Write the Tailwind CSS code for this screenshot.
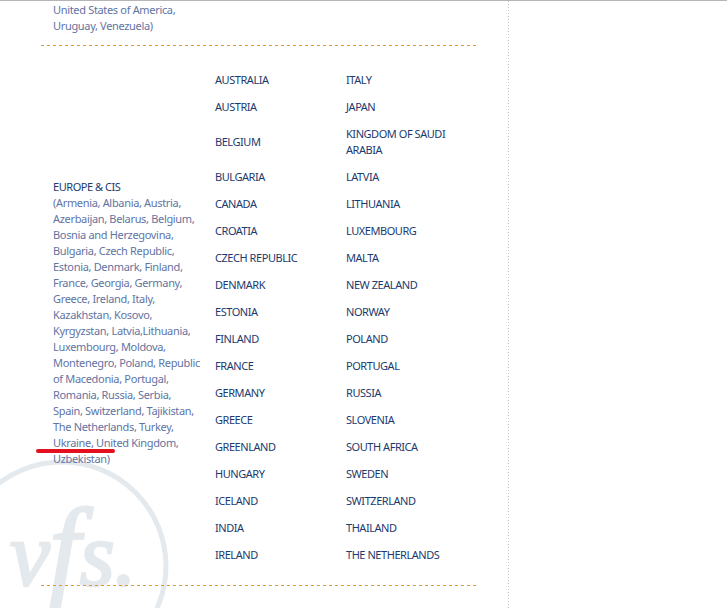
<!DOCTYPE html>
<html lang="en">
<head>
    <meta charset="UTF-8">
    <title>VFS Countries</title>
    <script src="https://cdn.jsdelivr.net/npm/@tailwindcss/browser@4"></script>
</head>
<body class="bg-white">
    <div class="relative w-[727px] h-[608px] overflow-hidden border-t border-[#b5b5b5] font-['Noto_Sans',sans-serif] text-[11px] tracking-[-0.45px] leading-4 text-[#1c3a6e]">
        <!-- watermark -->
        <svg class="absolute left-0 top-[-1px]" width="180" height="608" viewBox="0 0 180 608">
            <circle cx="62" cy="566" r="104" fill="none" stroke="#e4e9ee" stroke-width="5"/>
            <text x="10" y="585" font-family="Liberation Serif" font-style="italic" font-size="90" fill="#e4e9ee" stroke="#e4e9ee" stroke-width="2.5">v<tspan font-size="110">f</tspan>s.</text>
        </svg>

        <div class="relative flex h-full">
            <div class="w-[508px] pl-[41px]">
                <div class="w-[435px]">
                    <div class="h-[44px] pl-3 pt-[1px] text-[#5f74a3] tracking-[-0.33px]">United States of America,<br>Uruguay, Venezuela)</div>
                    <div class="h-px bg-[repeating-linear-gradient(to_right,#e0982f_0,#e0982f_3px,transparent_3px,transparent_6px)]"></div>
                    <div class="h-[539px] flex pt-[20px]">
                        <div class="w-[174px] shrink-0 pl-3 flex items-center pb-[6px]">
                            <p>EUROPE &amp; CIS<br>
                            <span class="text-[#5f74a3] tracking-[-0.33px]">(Armenia, Albania, Austria,<br>
                            Azerbaijan, Belarus, Belgium,<br>
                            Bosnia and Herzegovina,<br>
                            Bulgaria, Czech Republic,<br>
                            Estonia, Denmark, Finland,<br>
                            France, Georgia, Germany,<br>
                            Greece, Ireland, Italy,<br>
                            Kazakhstan, Kosovo,<br>
                            Kyrgyzstan, Latvia,Lithuania,<br>
                            Luxembourg, Moldova,<br>
                            Montenegro, Poland, Republic<br>
                            of Macedonia, Portugal,<br>
                            Romania, Russia, Serbia,<br>
                            Spain, Switzerland, Tajikistan,<br>
                            The Netherlands, Turkey,<br>
                            Ukraine, United Kingdom,<br>
                            Uzbekistan)</span></p>
                        </div>
                        <div class="w-[131px] shrink-0">
                            <div class="h-[27px] flex items-center">AUSTRALIA</div>
                            <div class="h-[27px] flex items-center">AUSTRIA</div>
                            <div class="h-[43px] flex items-center">BELGIUM</div>
                            <div class="h-[27px] flex items-center">BULGARIA</div>
                            <div class="h-[27px] flex items-center">CANADA</div>
                            <div class="h-[27px] flex items-center">CROATIA</div>
                            <div class="h-[27px] flex items-center">CZECH REPUBLIC</div>
                            <div class="h-[27px] flex items-center">DENMARK</div>
                            <div class="h-[27px] flex items-center">ESTONIA</div>
                            <div class="h-[27px] flex items-center">FINLAND</div>
                            <div class="h-[27px] flex items-center">FRANCE</div>
                            <div class="h-[27px] flex items-center">GERMANY</div>
                            <div class="h-[27px] flex items-center">GREECE</div>
                            <div class="h-[27px] flex items-center">GREENLAND</div>
                            <div class="h-[27px] flex items-center">HUNGARY</div>
                            <div class="h-[27px] flex items-center">ICELAND</div>
                            <div class="h-[27px] flex items-center">INDIA</div>
                            <div class="h-[27px] flex items-center">IRELAND</div>
                        </div>
                        <div class="flex-1">
                            <div class="h-[27px] flex items-center">ITALY</div>
                            <div class="h-[27px] flex items-center">JAPAN</div>
                            <div class="h-[43px] flex items-center">KINGDOM OF SAUDI<br>ARABIA</div>
                            <div class="h-[27px] flex items-center">LATVIA</div>
                            <div class="h-[27px] flex items-center">LITHUANIA</div>
                            <div class="h-[27px] flex items-center">LUXEMBOURG</div>
                            <div class="h-[27px] flex items-center">MALTA</div>
                            <div class="h-[27px] flex items-center">NEW ZEALAND</div>
                            <div class="h-[27px] flex items-center">NORWAY</div>
                            <div class="h-[27px] flex items-center">POLAND</div>
                            <div class="h-[27px] flex items-center">PORTUGAL</div>
                            <div class="h-[27px] flex items-center">RUSSIA</div>
                            <div class="h-[27px] flex items-center">SLOVENIA</div>
                            <div class="h-[27px] flex items-center">SOUTH AFRICA</div>
                            <div class="h-[27px] flex items-center">SWEDEN</div>
                            <div class="h-[27px] flex items-center">SWITZERLAND</div>
                            <div class="h-[27px] flex items-center">THAILAND</div>
                            <div class="h-[27px] flex items-center">THE NETHERLANDS</div>
                        </div>
                    </div>
                    <div class="h-px bg-[repeating-linear-gradient(to_right,#e0982f_0,#e0982f_3px,transparent_3px,transparent_6px)]"></div>
                </div>
            </div>
            <div class="w-px h-full bg-[repeating-linear-gradient(to_bottom,#c4c4c4_0,#c4c4c4_1px,transparent_1px,transparent_3px)]"></div>
        </div>

        <!-- red marker -->
        <div class="absolute left-[36px] top-[448px] w-[79px] h-[4px] rounded-full bg-[#e3111f]"></div>
    </div>
</body>
</html>
